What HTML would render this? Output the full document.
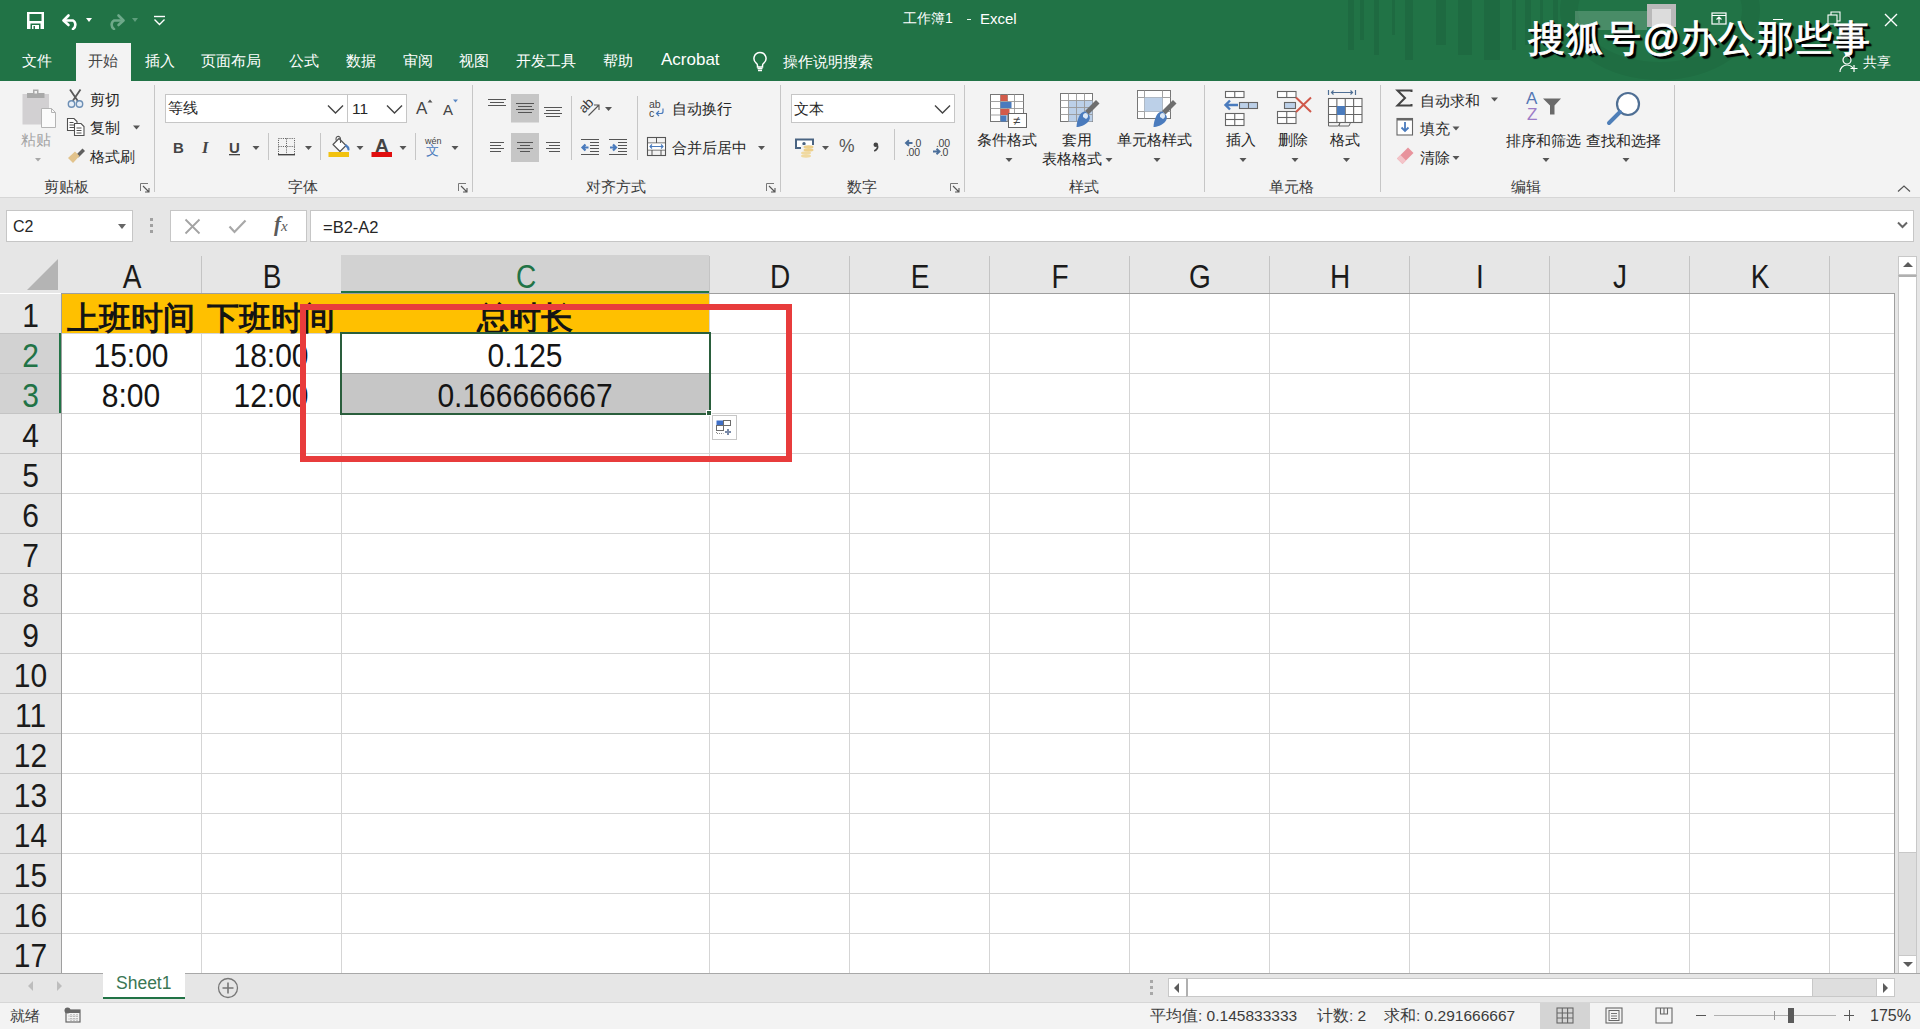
<!DOCTYPE html><html><head><meta charset="utf-8"><style>
*{margin:0;padding:0;box-sizing:border-box}
html,body{width:1920px;height:1029px;overflow:hidden;background:#fff;font-family:"Liberation Sans",sans-serif;color:#262626;position:relative}
div,span,svg{position:absolute}
.t{white-space:nowrap;line-height:1}
.tab{top:53px;font-size:15px;color:#fff}
.rt{font-size:14.5px;color:#262626}
.grp{top:178px;font-size:14.5px;color:#3b3b3b}
.ar{width:0;height:0;border-left:3.5px solid transparent;border-right:3.5px solid transparent;border-top:4px solid #555}
.vs{width:1px;background:#c8c8c8}
.ch{top:255px;height:38px;font-size:28px;line-height:44px;text-align:center;color:#1b1b1b;transform:scaleY(1.18)}
.rh{left:0;width:61px;font-size:30px;line-height:40px;text-align:center;color:#1b1b1b;transform:scaleY(1.1)}
.cell{font-size:30px;text-align:center;color:#141414;line-height:40px}
.num{transform:scaleY(1.1)}
</style></head><body>
<div style="left:0;top:0;width:1920px;height:81px;background:#217346;overflow:hidden">
<div style="left:1348px;top:0;width:6px;height:50px;background:rgba(0,0,0,0.07)"></div>
<div style="left:1360px;top:0;width:4px;height:40px;background:rgba(0,0,0,0.07)"></div>
<div style="left:1374px;top:0;width:5px;height:55px;background:rgba(0,0,0,0.07)"></div>
<div style="left:1392px;top:0;width:3px;height:35px;background:rgba(0,0,0,0.07)"></div>
<div style="left:1405px;top:0;width:8px;height:60px;background:rgba(0,0,0,0.07)"></div>
<div style="left:1436px;top:0;width:10px;height:45px;background:rgba(0,0,0,0.07)"></div>
<div style="left:1458px;top:0;width:14px;height:55px;background:rgba(0,0,0,0.07)"></div>
<div style="left:1484px;top:0;width:16px;height:60px;background:rgba(0,0,0,0.07)"></div>
<div style="left:1512px;top:0;width:4px;height:50px;background:rgba(0,0,0,0.07)"></div>
<div style="left:1525px;top:0;width:6px;height:45px;background:rgba(0,0,0,0.07)"></div>
<div style="left:1540px;top:0;width:3px;height:40px;background:rgba(0,0,0,0.07)"></div>
<div style="left:1553px;top:0;width:5px;height:42px;background:rgba(0,0,0,0.07)"></div>
<div style="left:1560px;top:-60px;width:200px;height:140px;border-radius:50%;border:18px solid rgba(0,0,0,0.05)"></div>
<div style="left:1575px;top:11px;width:72px;height:19px;background:rgba(255,255,255,0.18)"></div>
<div style="left:1647px;top:4px;width:29px;height:23px;background:#b9b9b9"></div>
<div style="left:1652px;top:9px;width:19px;height:18px;background:#dcdcdc"></div>
<div class="t" style="left:903px;top:10.5px;font-size:14px;color:#fff">工作簿1</div>
<div style="left:967px;top:19px;width:4px;height:1px;background:#e8f5ec"></div>
<div class="t" style="left:980px;top:10.5px;font-size:15px;color:#fff">Excel</div>
<svg style="left:26px;top:11px" width="19" height="19" viewBox="0 0 19 19"><path d="M1 1h17v17H1z" fill="#fff"/><rect x="3.5" y="3" width="12" height="7" fill="#217346"/><rect x="4.5" y="12.5" width="10" height="5.5" fill="#217346"/><rect x="6" y="14" width="7" height="4" fill="#fff"/><rect x="7.5" y="15" width="1.5" height="3" fill="#217346"/></svg>
<svg style="left:61px;top:13px" width="20" height="17" viewBox="0 0 20 17"><path d="M3 7.5h9a5 5 0 0 1 0 8.5" fill="none" stroke="#fff" stroke-width="2.6" stroke-linecap="round"/><path d="M7.5 2.5L2.5 7.5L7.5 12" fill="none" stroke="#fff" stroke-width="2.6" stroke-linecap="round" stroke-linejoin="round"/></svg>
<div class="ar" style="left:86px;top:18px;border-top-color:#fff"></div>
<svg style="left:106px;top:13px" width="20" height="17" viewBox="0 0 20 17"><path d="M17 7.5h-9a5 5 0 0 0 0 8.5" fill="none" stroke="#6ea98a" stroke-width="2.6" stroke-linecap="round"/><path d="M12.5 2.5L17.5 7.5L12.5 12" fill="none" stroke="#6ea98a" stroke-width="2.6" stroke-linecap="round" stroke-linejoin="round"/></svg>
<div class="ar" style="left:132px;top:18px;border-top-color:#5e9e7c"></div>
<svg style="left:153px;top:15px" width="13" height="11" viewBox="0 0 13 11"><path d="M1 1.5h11" stroke="#fff" stroke-width="1.4"/><path d="M1.5 4.5L6.5 9.5L11.5 4.5" fill="none" stroke="#fff" stroke-width="1.4"/></svg>
<div style="left:76px;top:43px;width:55px;height:38px;background:#f3f3f3"></div>
<div class="t tab" style="left:22px;color:#fff">文件</div>
<div class="t tab" style="left:88px;color:#444">开始</div>
<div class="t tab" style="left:145px;color:#fff">插入</div>
<div class="t tab" style="left:201px;color:#fff">页面布局</div>
<div class="t tab" style="left:289px;color:#fff">公式</div>
<div class="t tab" style="left:346px;color:#fff">数据</div>
<div class="t tab" style="left:403px;color:#fff">审阅</div>
<div class="t tab" style="left:459px;color:#fff">视图</div>
<div class="t tab" style="left:516px;color:#fff">开发工具</div>
<div class="t tab" style="left:603px;color:#fff">帮助</div>
<div class="t tab" style="left:661px;top:51px;font-size:17px">Acrobat</div>
<svg style="left:752px;top:51px" width="16" height="21" viewBox="0 0 16 21"><path d="M8 1.5a6 6 0 0 0-3.6 10.8c.8.7 1.1 1.5 1.1 2.5v1.2h5v-1.2c0-1 .3-1.8 1.1-2.5A6 6 0 0 0 8 1.5z" fill="none" stroke="#fff" stroke-width="1.5"/><path d="M5.5 17.5h5M6 19.5h4" stroke="#fff" stroke-width="1.4"/></svg>
<div class="t tab" style="left:783px;top:54px">操作说明搜索</div>
<svg style="left:1711px;top:12px" width="16" height="13" viewBox="0 0 16 13"><rect x="1" y="1" width="14" height="11" fill="none" stroke="#fff" stroke-width="1.2"/><path d="M1 3.5h14M8 5v6M5.5 7.5L8 5l2.5 2.5" fill="none" stroke="#fff" stroke-width="1.1"/></svg>
<div style="left:1773px;top:19px;width:10px;height:1px;background:#fff"></div>
<svg style="left:1827px;top:11px" width="14" height="14" viewBox="0 0 14 14"><rect x="1" y="4" width="9" height="9" fill="none" stroke="#fff" stroke-width="1.1"/><path d="M4 4V1h9v9h-3" fill="none" stroke="#fff" stroke-width="1.1"/></svg>
<svg style="left:1884px;top:13px" width="14" height="14" viewBox="0 0 14 14"><path d="M1 1L13 13M13 1L1 13" stroke="#fff" stroke-width="1.4"/></svg>
<div class="t" style="left:1528px;top:20px;font-size:37px;color:#fff;-webkit-text-stroke:0.8px #fff;text-shadow:3px 3px 1px #000, 2px 2px 0 #000, 1px 1px 0 #000;letter-spacing:1.2px;font-family:'Liberation Sans',sans-serif">搜狐号<span style="position:static;letter-spacing:0px">@</span>办公那些事</div>
<svg style="left:1839px;top:55px" width="20" height="18" viewBox="0 0 20 18"><circle cx="8" cy="5" r="4" fill="none" stroke="#fff" stroke-width="1.2"/><path d="M1 17c0-4 3-7 7-7s5 2 6 3" fill="none" stroke="#fff" stroke-width="1.2"/><path d="M15 10v7M11.5 13.5h7" stroke="#fff" stroke-width="1.2"/></svg>
<div class="t" style="left:1863px;top:56px;font-size:13.5px;color:#fff">共享</div>
</div>
<div style="left:0;top:81px;width:1920px;height:117px;background:#f3f3f3;border-bottom:1px solid #d6d6d6"></div>
<div style="left:0;top:198px;width:1920px;height:57px;background:#e6e6e6"></div>
<div style="left:6px;top:210px;width:127px;height:32px;background:#fff;border:1px solid #c6c6c6"></div>
<div class="t" style="left:13px;top:219px;font-size:16px;color:#262626">C2</div>
<div class="ar" style="left:118px;top:224px;border-top-color:#666;border-left-width:4px;border-right-width:4px;border-top-width:5px"></div>
<div style="left:150px;top:218px;width:3px;height:3px;background:#a0a0a0"></div>
<div style="left:150px;top:224px;width:3px;height:3px;background:#a0a0a0"></div>
<div style="left:150px;top:230px;width:3px;height:3px;background:#a0a0a0"></div>
<div style="left:170px;top:210px;width:137px;height:32px;background:#fff;border:1px solid #c6c6c6"></div>
<svg style="left:184px;top:218px" width="18" height="17" viewBox="0 0 18 17"><path d="M1.5 1.5L15.5 15.5M15.5 1.5L1.5 15.5" stroke="#a3a3a3" stroke-width="1.8"/></svg>
<svg style="left:228px;top:219px" width="19" height="15" viewBox="0 0 19 15"><path d="M1.5 7.5L6.5 13L17.5 1.5" fill="none" stroke="#a8a8a8" stroke-width="2.2"/></svg>
<div class="t" style="left:274px;top:214px;font-size:21px;color:#5a5a5a;font-family:'Liberation Serif',serif;font-style:italic;font-weight:bold">f<span style="position:relative;font-size:15px;font-weight:normal">x</span></div>
<div style="left:310px;top:210px;width:1604px;height:32px;background:#fff;border:1px solid #c6c6c6"></div>
<div class="t" style="left:323px;top:219px;font-size:16.5px;color:#262626">=B2-A2</div>
<svg style="left:1897px;top:221px" width="11" height="8" viewBox="0 0 11 8"><path d="M1 1.5L5.5 6L10 1.5" fill="none" stroke="#666" stroke-width="2"/></svg>
<div style="left:0;top:255px;width:1895px;height:38px;background:#e6e6e6"></div>
<svg style="left:26px;top:258px" width="33" height="33" viewBox="0 0 33 33"><path d="M32 1V32H1Z" fill="#b4b4b4"/></svg>
<div class="ch" style="left:62px;width:140px;color:#1b1b1b">A</div>
<div style="left:201px;top:256px;width:1px;height:37px;background:#c4c4c4"></div>
<div class="ch" style="left:202px;width:140px;color:#1b1b1b">B</div>
<div style="left:341px;top:256px;width:1px;height:37px;background:#c4c4c4"></div>
<div style="left:341px;top:255px;width:368px;height:38px;background:#d2d2d2"></div>
<div class="ch" style="left:342px;width:368px;color:#217346">C</div>
<div style="left:709px;top:256px;width:1px;height:37px;background:#c4c4c4"></div>
<div class="ch" style="left:710px;width:140px;color:#1b1b1b">D</div>
<div style="left:849px;top:256px;width:1px;height:37px;background:#c4c4c4"></div>
<div class="ch" style="left:850px;width:140px;color:#1b1b1b">E</div>
<div style="left:989px;top:256px;width:1px;height:37px;background:#c4c4c4"></div>
<div class="ch" style="left:990px;width:140px;color:#1b1b1b">F</div>
<div style="left:1129px;top:256px;width:1px;height:37px;background:#c4c4c4"></div>
<div class="ch" style="left:1130px;width:140px;color:#1b1b1b">G</div>
<div style="left:1269px;top:256px;width:1px;height:37px;background:#c4c4c4"></div>
<div class="ch" style="left:1270px;width:140px;color:#1b1b1b">H</div>
<div style="left:1409px;top:256px;width:1px;height:37px;background:#c4c4c4"></div>
<div class="ch" style="left:1410px;width:140px;color:#1b1b1b">I</div>
<div style="left:1549px;top:256px;width:1px;height:37px;background:#c4c4c4"></div>
<div class="ch" style="left:1550px;width:140px;color:#1b1b1b">J</div>
<div style="left:1689px;top:256px;width:1px;height:37px;background:#c4c4c4"></div>
<div class="ch" style="left:1690px;width:140px;color:#1b1b1b">K</div>
<div style="left:1829px;top:256px;width:1px;height:37px;background:#c4c4c4"></div>
<div class="ch" style="left:1830px;width:65px;color:#1b1b1b"></div>
<div style="left:61px;top:293px;width:1834px;height:1px;background:#9f9f9f"></div>
<div style="left:341px;top:291px;width:368px;height:2px;background:#217346"></div>
<div style="left:0;top:294px;width:61px;height:679px;background:#e6e6e6"></div>
<div style="left:0;top:333px;width:61px;height:80px;background:#d2d2d2"></div>
<div class="rh" style="top:296px;height:40px;color:#1b1b1b">1</div>
<div style="left:0;top:333px;width:61px;height:1px;background:#c4c4c4"></div>
<div class="rh" style="top:336px;height:40px;color:#217346">2</div>
<div style="left:0;top:373px;width:61px;height:1px;background:#c4c4c4"></div>
<div class="rh" style="top:376px;height:40px;color:#217346">3</div>
<div style="left:0;top:413px;width:61px;height:1px;background:#c4c4c4"></div>
<div class="rh" style="top:416px;height:40px;color:#1b1b1b">4</div>
<div style="left:0;top:453px;width:61px;height:1px;background:#c4c4c4"></div>
<div class="rh" style="top:456px;height:40px;color:#1b1b1b">5</div>
<div style="left:0;top:493px;width:61px;height:1px;background:#c4c4c4"></div>
<div class="rh" style="top:496px;height:40px;color:#1b1b1b">6</div>
<div style="left:0;top:533px;width:61px;height:1px;background:#c4c4c4"></div>
<div class="rh" style="top:536px;height:40px;color:#1b1b1b">7</div>
<div style="left:0;top:573px;width:61px;height:1px;background:#c4c4c4"></div>
<div class="rh" style="top:576px;height:40px;color:#1b1b1b">8</div>
<div style="left:0;top:613px;width:61px;height:1px;background:#c4c4c4"></div>
<div class="rh" style="top:616px;height:40px;color:#1b1b1b">9</div>
<div style="left:0;top:653px;width:61px;height:1px;background:#c4c4c4"></div>
<div class="rh" style="top:656px;height:40px;color:#1b1b1b">10</div>
<div style="left:0;top:693px;width:61px;height:1px;background:#c4c4c4"></div>
<div class="rh" style="top:696px;height:40px;color:#1b1b1b">11</div>
<div style="left:0;top:733px;width:61px;height:1px;background:#c4c4c4"></div>
<div class="rh" style="top:736px;height:40px;color:#1b1b1b">12</div>
<div style="left:0;top:773px;width:61px;height:1px;background:#c4c4c4"></div>
<div class="rh" style="top:776px;height:40px;color:#1b1b1b">13</div>
<div style="left:0;top:813px;width:61px;height:1px;background:#c4c4c4"></div>
<div class="rh" style="top:816px;height:40px;color:#1b1b1b">14</div>
<div style="left:0;top:853px;width:61px;height:1px;background:#c4c4c4"></div>
<div class="rh" style="top:856px;height:40px;color:#1b1b1b">15</div>
<div style="left:0;top:893px;width:61px;height:1px;background:#c4c4c4"></div>
<div class="rh" style="top:896px;height:40px;color:#1b1b1b">16</div>
<div style="left:0;top:933px;width:61px;height:1px;background:#c4c4c4"></div>
<div class="rh" style="top:936px;height:40px;color:#1b1b1b">17</div>
<div style="left:0;top:973px;width:61px;height:1px;background:#c4c4c4"></div>
<div style="left:61px;top:293px;width:1px;height:680px;background:#9f9f9f"></div>
<div style="left:59px;top:333px;width:2px;height:80px;background:#217346"></div>
<div style="left:62px;top:294px;width:647px;height:39px;background:#ffc000"></div>
<div style="left:342px;top:374px;width:367px;height:39px;background:#c6c6c6"></div>
<div style="left:201px;top:294px;width:1px;height:679px;background:#d5d5d5"></div>
<div style="left:341px;top:294px;width:1px;height:679px;background:#d5d5d5"></div>
<div style="left:709px;top:294px;width:1px;height:679px;background:#d5d5d5"></div>
<div style="left:849px;top:294px;width:1px;height:679px;background:#d5d5d5"></div>
<div style="left:989px;top:294px;width:1px;height:679px;background:#d5d5d5"></div>
<div style="left:1129px;top:294px;width:1px;height:679px;background:#d5d5d5"></div>
<div style="left:1269px;top:294px;width:1px;height:679px;background:#d5d5d5"></div>
<div style="left:1409px;top:294px;width:1px;height:679px;background:#d5d5d5"></div>
<div style="left:1549px;top:294px;width:1px;height:679px;background:#d5d5d5"></div>
<div style="left:1689px;top:294px;width:1px;height:679px;background:#d5d5d5"></div>
<div style="left:1829px;top:294px;width:1px;height:679px;background:#d5d5d5"></div>
<div style="left:1894px;top:293px;width:1px;height:680px;background:#9f9f9f"></div>
<div style="left:62px;top:333px;width:1832px;height:1px;background:#d5d5d5"></div>
<div style="left:62px;top:373px;width:1832px;height:1px;background:#d5d5d5"></div>
<div style="left:62px;top:413px;width:1832px;height:1px;background:#d5d5d5"></div>
<div style="left:62px;top:453px;width:1832px;height:1px;background:#d5d5d5"></div>
<div style="left:62px;top:493px;width:1832px;height:1px;background:#d5d5d5"></div>
<div style="left:62px;top:533px;width:1832px;height:1px;background:#d5d5d5"></div>
<div style="left:62px;top:573px;width:1832px;height:1px;background:#d5d5d5"></div>
<div style="left:62px;top:613px;width:1832px;height:1px;background:#d5d5d5"></div>
<div style="left:62px;top:653px;width:1832px;height:1px;background:#d5d5d5"></div>
<div style="left:62px;top:693px;width:1832px;height:1px;background:#d5d5d5"></div>
<div style="left:62px;top:733px;width:1832px;height:1px;background:#d5d5d5"></div>
<div style="left:62px;top:773px;width:1832px;height:1px;background:#d5d5d5"></div>
<div style="left:62px;top:813px;width:1832px;height:1px;background:#d5d5d5"></div>
<div style="left:62px;top:853px;width:1832px;height:1px;background:#d5d5d5"></div>
<div style="left:62px;top:893px;width:1832px;height:1px;background:#d5d5d5"></div>
<div style="left:62px;top:933px;width:1832px;height:1px;background:#d5d5d5"></div>
<div style="left:62px;top:294px;width:647px;height:39px;background:#ffc000"></div>
<div class="t cell" style="left:61px;top:298px;width:140px;font-weight:bold;font-size:31.5px">上班时间</div>
<div class="t cell" style="left:201px;top:298px;width:140px;font-weight:bold;font-size:31.5px">下班时间</div>
<div class="t cell" style="left:341px;top:298px;width:368px;font-weight:bold;font-size:31.5px">总时长</div>
<div class="t cell num" style="left:61px;top:336px;width:140px">15:00</div>
<div class="t cell num" style="left:201px;top:336px;width:140px">18:00</div>
<div class="t cell num" style="left:341px;top:336px;width:368px">0.125</div>
<div class="t cell num" style="left:61px;top:376px;width:140px">8:00</div>
<div class="t cell num" style="left:201px;top:376px;width:140px">12:00</div>
<div class="t cell num" style="left:341px;top:376px;width:368px">0.166666667</div>
<div style="left:342px;top:373px;width:367px;height:1px;background:#a9a9a9"></div>
<div style="left:340px;top:332px;width:371px;height:83px;border:2px solid #2a5e3c"></div>
<div style="left:706px;top:410px;width:6px;height:6px;background:#2a5e3c;border:1px solid #fff"></div>
<div style="left:712px;top:415px;width:25px;height:25px;background:#fff;border:1px solid #c6c6c6"></div>
<svg style="left:716px;top:420px" width="18" height="16" viewBox="0 0 18 16"><rect x="0.5" y="0.5" width="7" height="5" fill="#3f6fc6"/><rect x="7.5" y="0.5" width="7" height="5" fill="#fff" stroke="#6b6b6b" stroke-width="1"/><rect x="0.5" y="5.5" width="7" height="5" fill="#fff" stroke="#6b6b6b" stroke-width="1"/><path d="M0.5 12v1.5h7" fill="none" stroke="#8a8a8a" stroke-dasharray="1 1"/><path d="M12 9v6M9 12h6" stroke="#7a8aa8" stroke-width="2"/></svg>
<div style="left:300px;top:304px;width:492px;height:158px;border:6.5px solid #e83c3c"></div>
<div style="left:1895px;top:255px;width:25px;height:718px;background:#e6e6e6"></div>
<div style="left:1898px;top:256px;width:19px;height:717px;background:#dedede;border:1px solid #c8c8c8"></div>
<div style="left:1898px;top:256px;width:19px;height:19px;background:#fff;border:1px solid #c8c8c8"></div>
<div style="left:1903px;top:262px;width:0;height:0;border-left:5px solid transparent;border-right:5px solid transparent;border-bottom:5px solid #5c5c5c"></div>
<div style="left:1898px;top:275px;width:19px;height:578px;background:#fff;border:1px solid #c8c8c8;border-top:2px solid #b0b0b0"></div>
<div style="left:1898px;top:955px;width:19px;height:19px;background:#fff;border:1px solid #c8c8c8"></div>
<div style="left:1903px;top:962px;width:0;height:0;border-left:5px solid transparent;border-right:5px solid transparent;border-top:5px solid #5c5c5c"></div>
<div style="left:0;top:973px;width:1920px;height:29px;background:#e6e6e6;border-top:1px solid #a8a8a8"></div>
<div style="left:28px;top:981px;width:0;height:0;border-top:5px solid transparent;border-bottom:5px solid transparent;border-right:5px solid #bdbdbd"></div>
<div style="left:57px;top:981px;width:0;height:0;border-top:5px solid transparent;border-bottom:5px solid transparent;border-left:5px solid #bdbdbd"></div>
<div style="left:103px;top:973px;width:82px;height:26px;background:#fff"></div>
<div style="left:103px;top:997px;width:82px;height:2px;background:#217346"></div>
<div class="t" style="left:116px;top:975px;font-size:17.5px;color:#3b7754">Sheet1</div>
<svg style="left:217px;top:977px" width="22" height="22" viewBox="0 0 22 22"><circle cx="11" cy="11" r="9.5" fill="none" stroke="#777" stroke-width="1.3"/><path d="M11 5.5v11M5.5 11h11" stroke="#777" stroke-width="1.6"/></svg>
<div style="left:1150px;top:980px;width:3px;height:3px;background:#a8a8a8"></div>
<div style="left:1150px;top:986px;width:3px;height:3px;background:#a8a8a8"></div>
<div style="left:1150px;top:992px;width:3px;height:3px;background:#a8a8a8"></div>
<div style="left:1168px;top:978px;width:727px;height:19px;background:#dedede;border:1px solid #c8c8c8"></div>
<div style="left:1168px;top:978px;width:19px;height:19px;background:#fff;border:1px solid #c8c8c8"></div>
<div style="left:1174px;top:983px;width:0;height:0;border-top:5px solid transparent;border-bottom:5px solid transparent;border-right:5px solid #5c5c5c"></div>
<div style="left:1186px;top:978px;width:627px;height:19px;background:#fff;border:1px solid #c8c8c8;border-left:2px solid #b0b0b0"></div>
<div style="left:1876px;top:978px;width:19px;height:19px;background:#fff;border:1px solid #c8c8c8"></div>
<div style="left:1883px;top:983px;width:0;height:0;border-top:5px solid transparent;border-bottom:5px solid transparent;border-left:5px solid #5c5c5c"></div>
<div style="left:0;top:1002px;width:1920px;height:27px;background:#f3f3f3;border-top:1px solid #d6d6d6"></div>
<div class="t" style="left:10px;top:1009px;font-size:14.5px;color:#3b3b3b">就绪</div>
<svg style="left:64px;top:1007px" width="17" height="16" viewBox="0 0 17 16"><rect x="2" y="3" width="14" height="12" fill="none" stroke="#666" stroke-width="1.2"/><rect x="2" y="3" width="14" height="3" fill="#666"/><circle cx="3.5" cy="3.5" r="3" fill="#666"/><path d="M4.5 9h10M4.5 12h10M7 7v7M10 7v7M13 7v7" stroke="#888" stroke-width="0.8" stroke-dasharray="1 1"/></svg>
<div class="t" style="left:1150px;top:1008px;font-size:15.5px;color:#3b3b3b">平均值: 0.145833333</div>
<div class="t" style="left:1317px;top:1008px;font-size:15.5px;color:#3b3b3b">计数: 2</div>
<div class="t" style="left:1384px;top:1008px;font-size:15.5px;color:#3b3b3b">求和: 0.291666667</div>
<div style="left:1540px;top:1003px;width:50px;height:26px;background:#d4d4d4"></div>
<svg style="left:1556px;top:1007px" width="18" height="17" viewBox="0 0 18 17"><rect x="1" y="1" width="16" height="15" fill="none" stroke="#666" stroke-width="1.1"/><path d="M1 6h16M1 11h16M6.3 1v15M11.6 1v15" stroke="#666" stroke-width="1.1"/></svg>
<svg style="left:1605px;top:1007px" width="18" height="17" viewBox="0 0 18 17"><rect x="1" y="1" width="16" height="15" fill="none" stroke="#666" stroke-width="1.1"/><rect x="4" y="3.5" width="10" height="10" fill="none" stroke="#666" stroke-width="1"/><path d="M6 6.5h6M6 9h6M6 11.5h6" stroke="#666" stroke-width="0.9"/></svg>
<svg style="left:1655px;top:1007px" width="18" height="17" viewBox="0 0 18 17"><path d="M1 1h16v15H1z" fill="none" stroke="#666" stroke-width="1.1"/><path d="M5.5 1v6h7V1M9 1v6" fill="none" stroke="#666" stroke-width="1.1"/></svg>
<div style="left:1696px;top:1015px;width:10px;height:1px;background:#555"></div>
<div style="left:1714px;top:1015px;width:122px;height:1px;background:#b0b0b0"></div>
<div style="left:1774px;top:1011px;width:1px;height:9px;background:#999"></div>
<div style="left:1788px;top:1008px;width:6px;height:15px;background:#5b5b5b"></div>
<div style="left:1844px;top:1015px;width:10px;height:1px;background:#555"></div>
<div style="left:1849px;top:1010px;width:1px;height:11px;background:#555"></div>
<div class="t" style="left:1870px;top:1008px;font-size:16px;color:#3b3b3b">175%</div>
<div style="left:165px;top:94px;width:183px;height:29px;background:#fff;border:1px solid #c6c6c6"></div>
<div style="left:347px;top:94px;width:60px;height:29px;background:#fff;border:1px solid #c6c6c6"></div>
<div style="left:791px;top:94px;width:164px;height:29px;background:#fff;border:1px solid #c6c6c6"></div>
<svg style="left:0;top:0" width="1920" height="200" viewBox="0 0 1920 200"><rect x="22.5" y="94" width="26.5" height="30.5" fill="#d2d0d2"/><rect x="27" y="93" width="17.5" height="5" fill="#a9a9a9"/><rect x="33" y="89.5" width="5.5" height="5" fill="#a9a9a9"/><rect x="34.5" y="91" width="2.5" height="2.5" fill="#f3f3f3"/><path d="M41.5 108.5h10l4 4v15h-14z" fill="#fbfbfb" stroke="#b4b4b4" stroke-width="1"/><path d="M51.5 108.5v4h4" fill="none" stroke="#b4b4b4"/><path d="M35.0 158h6l-3.0 3.5z" fill="#a8a8a8"/><path d="M70 89.5L78.5 102M80.5 89.5L72 102" stroke="#5a5a5a" stroke-width="1.8"/><circle cx="71.5" cy="104" r="3.2" fill="#e6eef7" stroke="#6d8fb5" stroke-width="1.4"/><circle cx="79.5" cy="104" r="3.2" fill="#e6eef7" stroke="#6d8fb5" stroke-width="1.4"/><path d="M67.5 118.5h6.5l3 3v9h-9.5z" fill="#fff" stroke="#505050" stroke-width="1.1"/><path d="M69.5 122.5h4M69.5 125h5M69.5 127.5h5" stroke="#505050" stroke-width="1"/><path d="M74.5 123.5h6.5l3 3v9h-9.5z" fill="#fff" stroke="#505050" stroke-width="1.1"/><path d="M76.5 128h5M76.5 130.5h5M76.5 133h5" stroke="#505050" stroke-width="1"/><path d="M133.0 125.5h7l-3.5 4z" fill="#555"/><path d="M76 155L82.5 148.5L85 151L78.5 157.5z" fill="#606060"/><path d="M68 158L75 151.5L79.5 156L73 163z" fill="#e2c38c"/><path d="M140.5 191V183.5H148" fill="none" stroke="#777" stroke-width="1"/><path d="M143 186L149 192M149 188V192H145" fill="none" stroke="#555" stroke-width="1.1"/><rect x="154" y="85" width="1" height="107" fill="#c6c6c6"/><path d="M328 105.5L335.5 113L343 105.5" fill="none" stroke="#444" stroke-width="1.4"/><path d="M387 105.5L394.5 113L402 105.5" fill="none" stroke="#444" stroke-width="1.4"/><path d="M427.5 102.5l2.5-3l2.5 3z" fill="#555"/><path d="M453 99.5h5l-2.5 3z" fill="#5b88c4"/><rect x="229" y="154" width="11" height="1.3" fill="#444"/><path d="M252.5 146h7l-3.5 4z" fill="#555"/><rect x="268" y="133" width="1" height="27" fill="#c6c6c6"/><rect x="278.5" y="138.5" width="16" height="16" fill="none" stroke="#555" stroke-width="1" stroke-dasharray="1 1.2"/><path d="M286.5 138.5v16M278.5 146.5h16" stroke="#555" stroke-width="1" stroke-dasharray="1 1.2"/><rect x="278" y="154" width="17" height="1.4" fill="#444"/><path d="M305.0 146h7l-3.5 4z" fill="#555"/><rect x="320" y="133" width="1" height="27" fill="#c6c6c6"/><path d="M333 144.5L339 138.5L346 145.5L340 151.5z" fill="#fff" stroke="#555" stroke-width="1.2" stroke-linejoin="round"/><path d="M336.5 141c-1-2-0.5-4 1-4.5s3 0.5 3 2.5v4" fill="none" stroke="#555" stroke-width="1.1"/><path d="M346 145.5c1.5 1 2.5 2.5 2.5 4" fill="none" stroke="#4a7bbd" stroke-width="2.2" stroke-linecap="round"/><rect x="328.5" y="152" width="20.5" height="5" fill="#f2c20f"/><path d="M356.5 146h7l-3.5 4z" fill="#555"/><rect x="371.5" y="152" width="20.5" height="5" fill="#e00e0e"/><path d="M399.5 146h7l-3.5 4z" fill="#555"/><rect x="415" y="133" width="1" height="27" fill="#c6c6c6"/><path d="M451.5 146h7l-3.5 4z" fill="#555"/><path d="M458.5 191V183.5H466" fill="none" stroke="#777" stroke-width="1"/><path d="M461 186L467 192M467 188V192H463" fill="none" stroke="#555" stroke-width="1.1"/><rect x="472" y="85" width="1" height="107" fill="#c6c6c6"/><rect x="511" y="94" width="28" height="28.5" fill="#c6c6c6"/><rect x="511" y="133" width="28" height="29" fill="#c6c6c6"/><rect x="488" y="99" width="18" height="1" fill="#555"/><rect x="490" y="102" width="14" height="1" fill="#555"/><rect x="488" y="105" width="18" height="1" fill="#555"/><rect x="516" y="103" width="18" height="1" fill="#555"/><rect x="518" y="106" width="14" height="1" fill="#555"/><rect x="516" y="109" width="18" height="1" fill="#555"/><rect x="518" y="112" width="14" height="1" fill="#555"/><rect x="544" y="107" width="18" height="1" fill="#555"/><rect x="546" y="110" width="14" height="1" fill="#555"/><rect x="544" y="113" width="18" height="1" fill="#555"/><rect x="546" y="116" width="14" height="1" fill="#555"/><rect x="490" y="142" width="14" height="1" fill="#555"/><rect x="490" y="145" width="11" height="1" fill="#555"/><rect x="490" y="148" width="14" height="1" fill="#555"/><rect x="490" y="151" width="11" height="1" fill="#555"/><rect x="517" y="142" width="16" height="1" fill="#555"/><rect x="520" y="145" width="10" height="1" fill="#555"/><rect x="517" y="148" width="16" height="1" fill="#555"/><rect x="520" y="151" width="10" height="1" fill="#555"/><rect x="546" y="142" width="14" height="1" fill="#555"/><rect x="549" y="145" width="11" height="1" fill="#555"/><rect x="546" y="148" width="14" height="1" fill="#555"/><rect x="549" y="151" width="11" height="1" fill="#555"/><rect x="571" y="96" width="1" height="64" fill="#c6c6c6"/><path d="M588.5 115.5L598.5 105.5M594 105h5v5" fill="none" stroke="#555" stroke-width="1.1"/><path d="M605.0 107h7l-3.5 4z" fill="#555"/><rect x="581" y="139" width="18" height="1" fill="#555"/><rect x="590" y="142" width="9" height="1" fill="#555"/><rect x="590" y="145" width="9" height="1" fill="#555"/><rect x="590" y="148" width="9" height="1" fill="#555"/><rect x="590" y="151" width="9" height="1" fill="#555"/><rect x="581" y="154" width="18" height="1" fill="#555"/><path d="M588.5 147.5h-6M585.5 144.5L582.5 147.5L585.5 150.5" fill="none" stroke="#4a7bbd" stroke-width="2.2"/><rect x="609" y="139" width="18" height="1" fill="#555"/><rect x="618" y="142" width="9" height="1" fill="#555"/><rect x="618" y="145" width="9" height="1" fill="#555"/><rect x="618" y="148" width="9" height="1" fill="#555"/><rect x="618" y="151" width="9" height="1" fill="#555"/><rect x="609" y="154" width="18" height="1" fill="#555"/><path d="M610 147.5h6M613 144.5L616 147.5L613 150.5" fill="none" stroke="#4a7bbd" stroke-width="2.2"/><rect x="637" y="96" width="1" height="64" fill="#c6c6c6"/><path d="M663 108.5v3a2 2 0 0 1-2 2h-4M659 111l-2.5 2.5 2.5 2.5" fill="none" stroke="#4a7bbd" stroke-width="1.2"/><rect x="647.5" y="137.5" width="18" height="18" fill="none" stroke="#555" stroke-width="1.1"/><path d="M647.5 143h18M647.5 150h18M656.5 137.5v5.5M652 150v5.5M661 150v5.5" stroke="#555" stroke-width="1"/><rect x="648" y="143.5" width="17" height="6" fill="#fff"/><path d="M650 146.5h13M652 144.5l-2 2 2 2M661 144.5l2 2-2 2" fill="none" stroke="#4a7bbd" stroke-width="1.1"/><path d="M758.0 146h7l-3.5 4z" fill="#555"/><path d="M766.5 191V183.5H774" fill="none" stroke="#777" stroke-width="1"/><path d="M769 186L775 192M775 188V192H771" fill="none" stroke="#555" stroke-width="1.1"/><rect x="780" y="85" width="1" height="107" fill="#c6c6c6"/><path d="M935 105.5L942.5 113L950 105.5" fill="none" stroke="#444" stroke-width="1.4"/><rect x="796" y="139.5" width="17" height="8.5" fill="#fff" stroke="#4a6482" stroke-width="2"/><circle cx="804" cy="143.8" r="1.7" fill="#4a6482"/><rect x="801" y="145" width="13" height="12.5" fill="#f3f3f3"/><ellipse cx="808.5" cy="147" rx="5" ry="1.7" fill="#edcf8a"/><ellipse cx="808.5" cy="150" rx="5" ry="1.7" fill="#edcf8a"/><ellipse cx="806" cy="153" rx="5" ry="1.7" fill="#f0d9a0"/><ellipse cx="806" cy="156" rx="5" ry="1.7" fill="#f0d9a0"/><path d="M822.0 146h7l-3.5 4z" fill="#555"/><circle cx="875.8" cy="144.8" r="2.3" fill="#444"/><path d="M877.6 145.5c0.3 2.2-0.8 4.3-3.4 5.4" fill="none" stroke="#444" stroke-width="1.6"/><rect x="894" y="129" width="1" height="31" fill="#c6c6c6"/><path d="M912.5 143h-6.5M909 140.3L906 143L909 145.7" fill="none" stroke="#4a6e9a" stroke-width="1.9"/><path d="M933 151.5h6.5M936.5 148.8L939.5 151.5L936.5 154.2" fill="none" stroke="#4a6e9a" stroke-width="1.9"/><path d="M950.5 191V183.5H958" fill="none" stroke="#777" stroke-width="1"/><path d="M953 186L959 192M959 188V192H955" fill="none" stroke="#555" stroke-width="1.1"/><rect x="964" y="85" width="1" height="107" fill="#c6c6c6"/><rect x="990.5" y="94.5" width="33" height="27" fill="#fff" stroke="#777" stroke-width="1"/><path d="M990.5 101.5h33M990.5 108.5h33M990.5 115h33M1000.5 94.5v27M1007.5 94.5v27M1014.5 94.5v27" stroke="#999" stroke-width="0.9"/><rect x="1000.5" y="95" width="7" height="6" fill="#d35b4a"/><rect x="1000.5" y="102" width="11" height="6" fill="#4a7bbd"/><rect x="1000.5" y="109" width="9" height="6" fill="#d35b4a"/><rect x="1000.5" y="115.5" width="6" height="6" fill="#4a7bbd"/><rect x="1008.5" y="113.5" width="18" height="14" fill="#fff" stroke="#666" stroke-width="1"/><path d="M1005.5 158h7l-3.5 4z" fill="#555"/><rect x="1060.5" y="93.5" width="32" height="28" fill="#fff" stroke="#777" stroke-width="1"/><rect x="1068.5" y="100.5" width="24" height="21" fill="#bcd0e8"/><path d="M1060.5 100.5h32M1060.5 107.5h32M1060.5 114.5h32M1068.5 93.5v28M1076.5 93.5v28M1084.5 93.5v28" stroke="#999" stroke-width="0.9"/><path d="M1085 111L1096 100L1099.5 103.5L1088.5 114.5z" fill="#6e6e6e"/><path d="M1085.5 111.5c-3 0-5 2-6 4-1.5 3-3 8-3 11.5 3 0 9-2 11.5-5 2-2 2.5-5 1-7z" fill="#4a7bbd"/><path d="M1086 113c-2 0-3.5 1.5-3 4l3 2c2-1 2.5-3 1.5-5z" fill="#dce8f5"/><path d="M1105.5 158h7l-3.5 4z" fill="#555"/><rect x="1137.5" y="90.5" width="33" height="28" fill="#fff" stroke="#777" stroke-width="1"/><path d="M1137.5 97.5h33M1137.5 111.5h33M1144.5 90.5v28M1162.5 90.5v28" stroke="#999" stroke-width="0.9"/><rect x="1144.5" y="97.5" width="18" height="14" fill="#bcd0e8"/><path d="M1162 111L1173 100L1176.5 103.5L1165.5 114.5z" fill="#6e6e6e"/><path d="M1162.5 111.5c-3 0-5 2-6 4-1.5 3-3 8-3 11.5 3 0 9-2 11.5-5 2-2 2.5-5 1-7z" fill="#4a7bbd"/><path d="M1163 113c-2 0-3.5 1.5-3 4l3 2c2-1 2.5-3 1.5-5z" fill="#dce8f5"/><path d="M1153.5 158h7l-3.5 4z" fill="#555"/><rect x="1204" y="85" width="1" height="107" fill="#c6c6c6"/><rect x="1225.5" y="91.5" width="18.5" height="6" fill="#fff" stroke="#666" stroke-width="1.1"/><path d="M1234.75 91.5v6" stroke="#666" stroke-width="1.1"/><rect x="1239.5" y="102.5" width="18" height="6" fill="#bcd0e8" stroke="#666" stroke-width="1.1"/><path d="M1248.5 102.5v6" stroke="#666" stroke-width="1.1"/><rect x="1225.5" y="113.5" width="18.5" height="12" fill="#fff" stroke="#666" stroke-width="1.1"/><path d="M1234.75 113.5v12" stroke="#666" stroke-width="1.1"/><path d="M1225.5 119.5h18.5" stroke="#666" stroke-width="1.1"/><path d="M1238 105h-12M1230 100.5L1225.5 105L1230 109.5" fill="none" stroke="#4a7bbd" stroke-width="2.4"/><path d="M1239.5 158h7l-3.5 4z" fill="#555"/><rect x="1277.5" y="91.5" width="18.5" height="6" fill="#fff" stroke="#666" stroke-width="1.1"/><path d="M1286.75 91.5v6" stroke="#666" stroke-width="1.1"/><rect x="1284.5" y="102.5" width="11" height="6" fill="#bcd0e8" stroke="#666" stroke-width="1.1"/><rect x="1277.5" y="111.5" width="18.5" height="12" fill="#fff" stroke="#666" stroke-width="1.1"/><path d="M1286.75 111.5v12" stroke="#666" stroke-width="1.1"/><path d="M1277.5 117.5h18.5" stroke="#666" stroke-width="1.1"/><path d="M1296 97.5L1311 112M1311 97.5L1296 112" stroke="#d0584a" stroke-width="2"/><path d="M1291.5 158h7l-3.5 4z" fill="#555"/><path d="M1328.5 90v5M1355.5 90v5M1331 92.5h22M1333.5 90.5l-2 2 2 2M1350.5 90.5l2 2-2 2" fill="none" stroke="#4f6f94" stroke-width="1.2"/><rect x="1328.5" y="98.5" width="33.5" height="24" fill="#fff" stroke="#666" stroke-width="1.1"/><path d="M1336.875 98.5v24" stroke="#666" stroke-width="1.1"/><path d="M1345.25 98.5v24" stroke="#666" stroke-width="1.1"/><path d="M1353.625 98.5v24" stroke="#666" stroke-width="1.1"/><path d="M1328.5 106.5h33.5" stroke="#666" stroke-width="1.1"/><path d="M1328.5 114.5h33.5" stroke="#666" stroke-width="1.1"/><rect x="1337" y="106" width="8" height="9" fill="#4a7bbd"/><path d="M1328.5 122.5v3.5h10l1.5-3.5M1340 122.5l-1 3.5h10l1.5-3.5" fill="none" stroke="#666" stroke-width="1"/><path d="M1343.0 158h7l-3.5 4z" fill="#555"/><rect x="1380" y="85" width="1" height="107" fill="#c6c6c6"/><path d="M1411.5 92v-1.5H1397.5L1405 98L1397.5 105.5H1411.5V104" fill="none" stroke="#444" stroke-width="2"/><path d="M1491.0 97.5h7l-3.5 4z" fill="#555"/><rect x="1397" y="118.5" width="15.5" height="16.5" fill="#fff" stroke="#666" stroke-width="1.1"/><rect x="1397" y="118.5" width="15.5" height="2" fill="#666"/><path d="M1405 122v9M1401.5 127.5L1405 131L1408.5 127.5" fill="none" stroke="#4a7bbd" stroke-width="1.8"/><path d="M1452.5 126.5h7l-3.5 4z" fill="#555"/><path d="M1397 158.5L1408 147.5L1413.5 153L1402.5 164z" fill="#e8939c"/><path d="M1397 158.5L1400.5 155L1406 160.5L1402.5 164z" fill="#f3c4c9"/><path d="M1452.5 156h7l-3.5 4z" fill="#555"/><path d="M1543 98.5h18l-6.5 7v9h-4.5v-9z" fill="#6a6a6a"/><path d="M1542.5 158h7l-3.5 4z" fill="#555"/><circle cx="1628" cy="104" r="11" fill="#fff" stroke="#4f6f94" stroke-width="2.2"/><path d="M1620 112L1609 123" stroke="#4f7fb8" stroke-width="4" stroke-linecap="round"/><path d="M1622.5 158h7l-3.5 4z" fill="#555"/><rect x="1674" y="85" width="1" height="107" fill="#c6c6c6"/><path d="M1898 191.5L1904 186L1910 191.5" fill="none" stroke="#555" stroke-width="1.2"/></svg>
<div class="t" style="left:21px;top:133px;font-size:14.5px;color:#a3a3a3;">粘贴</div>
<div class="t" style="left:90px;top:92.5px;font-size:14.5px;color:#262626;">剪切</div>
<div class="t" style="left:90px;top:121px;font-size:14.5px;color:#262626;">复制</div>
<div class="t" style="left:90px;top:150px;font-size:14.5px;color:#262626;">格式刷</div>
<div class="t" style="left:44px;top:179.5px;font-size:14.5px;color:#3b3b3b;">剪贴板</div>
<div class="t" style="left:168px;top:101px;font-size:14.5px;color:#262626;">等线</div>
<div class="t" style="left:352px;top:101px;font-size:15.5px;color:#262626;">11</div>
<div class="t" style="left:416px;top:100px;font-size:17px;color:#444;">A</div>
<div class="t" style="left:443px;top:102px;font-size:15px;color:#444;">A</div>
<div class="t" style="left:173px;top:140px;font-size:15px;color:#444;font-weight:bold">B</div>
<div class="t" style="left:202px;top:139.5px;font-size:16.5px;color:#444;font-weight:bold;font-style:italic;font-family:Liberation Serif,serif">I</div>
<div class="t" style="left:229px;top:140px;font-size:15px;color:#444;font-weight:bold">U</div>
<div class="t" style="left:375px;top:136px;font-size:19px;color:#444;font-weight:bold">A</div>
<div class="t" style="left:425px;top:137px;font-size:9px;color:#444;">wén</div>
<div class="t" style="left:426px;top:144px;font-size:13px;color:#4a7bbd;">文</div>
<div class="t" style="left:288px;top:179.5px;font-size:14.5px;color:#3b3b3b;">字体</div>
<div class="t" style="left:579px;top:98.5px;font-size:13.5px;color:#3a3a3a;transform:rotate(-45deg);transform-origin:50% 50%;letter-spacing:-0.5px">ab</div>
<div class="t" style="left:649px;top:99px;font-size:10.5px;color:#444;">ab</div>
<div class="t" style="left:649px;top:108px;font-size:10.5px;color:#444;">c</div>
<div class="t" style="left:672px;top:101.5px;font-size:14.5px;color:#262626;">自动换行</div>
<div class="t" style="left:672px;top:141px;font-size:14.5px;color:#262626;">合并后居中</div>
<div class="t" style="left:586px;top:179.5px;font-size:14.5px;color:#3b3b3b;">对齐方式</div>
<div class="t" style="left:794px;top:102px;font-size:14.5px;color:#262626;">文本</div>
<div class="t" style="left:839px;top:138px;font-size:17.5px;color:#555;">%</div>
<div class="t" style="left:913px;top:138px;font-size:10.5px;color:#444;letter-spacing:-0.3px">.0</div>
<div class="t" style="left:906px;top:147px;font-size:10.5px;color:#444;letter-spacing:-0.3px">.00</div>
<div class="t" style="left:936px;top:138px;font-size:10.5px;color:#444;letter-spacing:-0.3px">.00</div>
<div class="t" style="left:940px;top:147px;font-size:10.5px;color:#444;letter-spacing:-0.3px">.0</div>
<div class="t" style="left:847px;top:179.5px;font-size:14.5px;color:#3b3b3b;">数字</div>
<div class="t" style="left:1013px;top:114px;font-size:13px;color:#444;">≠</div>
<div class="t" style="left:977px;top:133px;font-size:14.5px;color:#262626;">条件格式</div>
<div class="t" style="left:1062px;top:133px;font-size:14.5px;color:#262626;">套用</div>
<div class="t" style="left:1042px;top:152px;font-size:14.5px;color:#262626;">表格格式</div>
<div class="t" style="left:1117px;top:133px;font-size:14.5px;color:#262626;">单元格样式</div>
<div class="t" style="left:1069px;top:179.5px;font-size:14.5px;color:#3b3b3b;">样式</div>
<div class="t" style="left:1226px;top:133px;font-size:14.5px;color:#262626;">插入</div>
<div class="t" style="left:1278px;top:133px;font-size:14.5px;color:#262626;">删除</div>
<div class="t" style="left:1330px;top:133px;font-size:14.5px;color:#262626;">格式</div>
<div class="t" style="left:1269px;top:179.5px;font-size:14.5px;color:#3b3b3b;">单元格</div>
<div class="t" style="left:1420px;top:94px;font-size:14.5px;color:#262626;">自动求和</div>
<div class="t" style="left:1420px;top:122px;font-size:14.5px;color:#262626;">填充</div>
<div class="t" style="left:1420px;top:151px;font-size:14.5px;color:#262626;">清除</div>
<div class="t" style="left:1526px;top:90px;font-size:17px;color:#5577b5;">A</div>
<div class="t" style="left:1527px;top:106px;font-size:17px;color:#9d7cc7;">Z</div>
<div class="t" style="left:1506px;top:133.5px;font-size:14.5px;color:#262626;">排序和筛选</div>
<div class="t" style="left:1586px;top:133.5px;font-size:14.5px;color:#262626;">查找和选择</div>
<div class="t" style="left:1511px;top:179.5px;font-size:14.5px;color:#3b3b3b;">编辑</div>
</body></html>
